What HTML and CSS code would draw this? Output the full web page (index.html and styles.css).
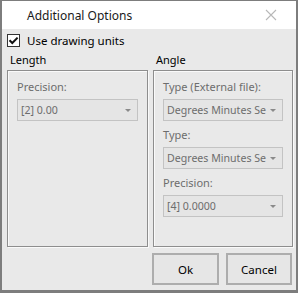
FILE: index.html
```html
<!DOCTYPE html>
<html>
<head>
<meta charset="utf-8">
<link rel="stylesheet" href="styles.css">
</head>
<body>
<div class="window">
  <div class="titlebar">
    <span class="title">Additional Options</span>
    <span class="close">
      <svg width="12" height="12" viewBox="0 0 12 12"><path d="M1 1 L11 11 M11 1 L1 11" stroke="#b8b8b8" stroke-width="1.1" fill="none"/></svg>
    </span>
  </div>
  <div class="content">
    <label class="check">
      <span class="box"><svg width="13" height="13" viewBox="0 0 13 13"><path d="M2.5 6.2 L5.3 9 L10.6 3.6" stroke="#111" stroke-width="2" fill="none"/></svg></span>
      <span class="check-label">Use drawing units</span>
    </label>
    <div class="groups">
      <div class="group">
        <div class="group-title">Length</div>
        <div class="group-box">
          <div class="field-label">Precision:</div>
          <div class="combo"><span class="value">[2] 0.00</span><span class="arrow"></span></div>
        </div>
      </div>
      <div class="group">
        <div class="group-title">Angle</div>
        <div class="group-box">
          <div class="field-label">Type (External file):</div>
          <div class="combo"><span class="value">Degrees Minutes Se</span><span class="arrow"></span></div>
          <div class="field-label">Type:</div>
          <div class="combo"><span class="value">Degrees Minutes Se</span><span class="arrow"></span></div>
          <div class="field-label">Precision:</div>
          <div class="combo"><span class="value">[4] 0.0000</span><span class="arrow"></span></div>
        </div>
      </div>
    </div>
    <div class="buttons">
      <button class="btn ok">Ok</button>
      <button class="btn cancel">Cancel</button>
    </div>
  </div>
</div>
</body>
</html>
```
FILE: styles.css
```css
html, body {
  margin: 0;
  padding: 0;
  background: #ffffff;
}
body {
  font-family: "Noto Sans", "Open Sans", sans-serif;
  font-size: 11px;
  color: #000;
}
.window {
  width: 298px;
  height: 293px;
  box-sizing: border-box;
  border: 1px solid #7d7d7d;
  border-left-width: 2px;
  border-bottom-width: 3px;
  border-right-width: 2px;
  background: #e9e9e9;
  display: flex;
  flex-direction: column;
}
.titlebar {
  height: 28px;
  background: #ffffff;
  display: flex;
  align-items: center;
  justify-content: space-between;
  padding: 0 19px 0 25px;
  box-sizing: border-box;
  flex: none;
}
.title {
  font-size: 12px;
  color: #1a1a1a;
}
.close {
  display: flex;
  width: 12px;
  height: 12px;
}
.content {
  flex: 1;
  display: flex;
  flex-direction: column;
  padding: 4px 4px 0 5px;
}
.check {
  display: flex;
  align-items: center;
  height: 14px;
  gap: 7px;
}
.box {
  width: 13px;
  height: 13px;
  box-sizing: border-box;
  border: 1px solid #333;
  background: #fff;
  display: flex;
  position: relative;
}
.box svg {
  position: absolute;
  left: -1px;
  top: -1px;
}
.check-label {
  font-size: 11.5px;
}
.groups {
  display: grid;
  grid-template-columns: 141px 140px;
  gap: 5px;
  margin-top: 5px;
}
.group-title {
  padding-left: 3px;
  height: 18px;
  line-height: 16px;
}
.group-box {
  border: 1px solid #8e8e8e;
  box-shadow: inset 1px 1px 0 #fafafa, 1px 1px 0 #fafafa;
  height: 177px;
  box-sizing: border-box;
  padding: 8px 9px 0 9px;
  display: flex;
  flex-direction: column;
}
.field-label {
  color: #6d6d6d;
  height: 15px;
  line-height: 15px;
  margin-bottom: 5px;
}
.combo {
  height: 22px;
  box-sizing: border-box;
  border: 1px solid #c3c3c3;
  background: #e5e5e5;
  color: #6d6d6d;
  font-size: 10.6px;
  display: flex;
  align-items: center;
  gap: 6px;
  padding: 0 6px 0 3px;
  margin-bottom: 6px;
}
.value {
  flex: 1;
  min-width: 0;
  white-space: nowrap;
}
.arrow {
  width: 0;
  height: 0;
  border-left: 3px solid transparent;
  border-right: 3px solid transparent;
  border-top: 3px solid #8a8a8a;
  flex: none;
}
.buttons {
  display: flex;
  justify-content: flex-end;
  gap: 7px;
  margin-top: 6px;
}
.btn {
  font-family: "Noto Sans", "Open Sans", sans-serif;
  font-size: 11.5px;
  height: 32px;
  background: #e6e6e6;
  border: 2px solid #adadad;
  color: #000;
  padding: 0;
}
.ok { width: 67px; }
.cancel { width: 66px; }
```
